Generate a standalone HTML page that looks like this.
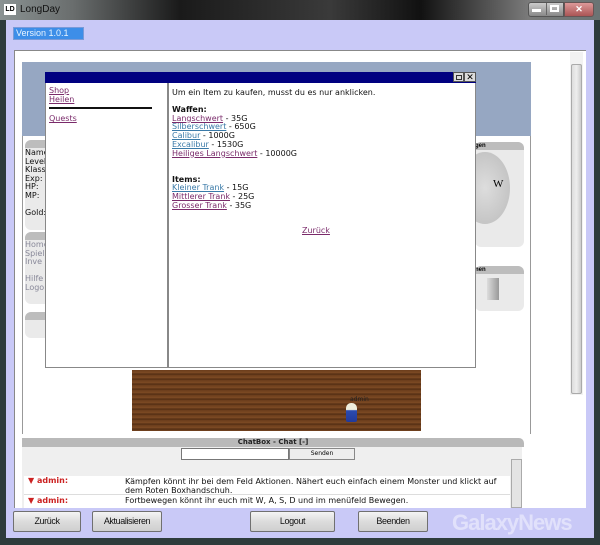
<!DOCTYPE html>
<html><head><meta charset="utf-8"><style>
*{margin:0;padding:0;box-sizing:border-box}
body{width:600px;height:545px;overflow:hidden;position:relative;background:#2e3c3c;font-family:"DejaVu Sans","Liberation Sans",sans-serif}
.a{position:absolute}
.t{font-size:8px;color:#111;line-height:8.7px;white-space:nowrap}
.l1{color:#7a2a6a;text-decoration:underline}
.l2{color:#3a7aa8;text-decoration:underline}
.btn{position:absolute;top:511px;height:21px;background:linear-gradient(#f4f4f4,#dcdcdc 50%,#cfcfcf);border:1px solid #707070;border-radius:2px;font-family:"Liberation Sans",sans-serif;font-size:9px;letter-spacing:-0.4px;text-align:center;line-height:19px;color:#111}
.gb{background:#eaeaea;border-radius:6px}
.gh{background:#bdbdbd;height:8px;border-radius:6px 6px 0 0}
</style></head><body>
<div class="a" style="left:0;top:0;width:600px;height:20px;background:linear-gradient(90deg,#8a9292,#6a6e6e 12%,#1a1a1a 30%,#3a3a3a 55%,#111 70%,#7a7a7a 88%,#6a7474)"></div>
<div class="a" style="left:4px;top:4px;width:12px;height:11px;background:#fff;color:#000;font:bold 7px 'Liberation Sans';line-height:11px;text-align:center">LD</div>
<div class="a" style="left:20px;top:4px;color:#111;font:10px 'Liberation Sans'">LongDay</div>
<div class="a" style="left:528px;top:2px;width:36px;height:15px;border:1px solid #555;border-radius:3px 0 0 3px;background:linear-gradient(#ccc,#888)"></div>
<div class="a" style="left:546px;top:3px;width:1px;height:12px;background:#666"></div>
<div class="a" style="left:532px;top:9px;width:9px;height:3px;background:#fff"></div>
<div class="a" style="left:550px;top:5px;width:9px;height:7px;border:2px solid #fff"></div>
<div class="a" style="left:564px;top:2px;width:30px;height:15px;border:1px solid #655;border-radius:0 3px 3px 0;background:linear-gradient(#d99,#a55);color:#fff;font:bold 9px sans-serif;text-align:center;line-height:13px">✕</div>
<div class="a" style="left:6px;top:20px;width:588px;height:518px;background:#c9c9f7"></div>
<div class="a" style="left:13px;top:27px;width:71px;height:13px;background:#3d8ee8;border:1px solid #7a9ad8;color:#e8f4ff;font:9px 'Liberation Sans';line-height:11px;padding-left:2px">Version 1.0.1</div>
<div class="a" style="left:14px;top:50px;width:572px;height:458px;background:#fff;border-top:1px solid #888;border-left:1px solid #888"></div>
<div class="a" style="left:570px;top:52px;width:13px;height:343px;background:#f2f2f2"></div>
<div class="a" style="left:571px;top:64px;width:11px;height:330px;background:linear-gradient(90deg,#ddd,#eee,#ccc);border:1px solid #aaa;border-radius:2px"></div>
<div class="a" style="left:22px;top:62px;width:509px;height:74px;background:#96a7c2"></div>
<div class="a" style="left:22px;top:136px;width:509px;height:298px;border-left:1px solid #999;border-right:1px solid #999"></div>
<div class="a gb" style="left:25px;top:140px;width:30px;height:90px"><div class="gh"></div></div>
<div class="a t" style="left:25px;top:149px;line-height:8.6px">Name<br>Level<br>Klass<br>Exp:<br>HP:<br>MP:<br><br>Gold:</div>
<div class="a gb" style="left:25px;top:232px;width:30px;height:72px"><div class="gh"></div></div>
<div class="a t" style="left:25px;top:241px;color:#889;line-height:8.6px">Home<br>Spiel<br>Inve<br><br>Hilfe<br>Logo</div>
<div class="a gb" style="left:25px;top:312px;width:30px;height:26px"><div class="gh"></div></div>
<div class="a gb" style="left:475px;top:142px;width:49px;height:105px"><div class="gh" style="font:bold 6px sans-serif;line-height:8px">gen</div></div>
<div class="a" style="left:460px;top:152px;width:50px;height:72px;border-radius:50%;background:radial-gradient(#ddd,#bbb)"></div>
<div class="a" style="left:493px;top:178px;font:11px 'Liberation Serif'">W</div>
<div class="a gb" style="left:475px;top:266px;width:49px;height:45px"><div class="gh" style="font:bold 6px sans-serif;line-height:8px">nen</div></div>
<div class="a" style="left:487px;top:278px;width:12px;height:22px;background:linear-gradient(90deg,#ddd,#999)"></div>
<div class="a" style="left:132px;top:370px;width:289px;height:61px;background:repeating-linear-gradient(#6b3d1c 0,#7d4a24 3px,#4a2810 4px,#6b3d1c 5px);"></div>
<div class="a" style="left:350px;top:396px;font-size:6px;color:#222">admin</div>
<div class="a" style="left:346px;top:403px;width:11px;height:19px;background:linear-gradient(#eed 0,#eed 35%,#2b4bb0 40%,#223a9a);border-radius:5px 5px 2px 2px"></div>
<div class="a" style="left:22px;top:438px;width:502px;height:9px;background:#b9b9b9;border-radius:0 5px 0 0;font:bold 7px 'DejaVu Sans';text-align:center;line-height:9px;color:#222">ChatBox - Chat [-]</div>
<div class="a" style="left:22px;top:447px;width:500px;height:61px;background:#efefef"></div>
<div class="a" style="left:181px;top:448px;width:108px;height:12px;background:#fff;border:1px solid #777"></div>
<div class="a" style="left:289px;top:448px;width:66px;height:12px;background:#eee;border:1px solid #888;font-size:6px;text-align:center;line-height:10px">Senden</div>
<div class="a" style="left:24px;top:476px;width:486px;height:32px;background:#fff"></div>
<div class="a" style="left:24px;top:494px;width:486px;height:1px;background:#ddd"></div>
<div class="a t" style="left:28px;top:477px;color:#c22;font-weight:bold">▼ admin:</div>
<div class="a t" style="left:125px;top:477px;line-height:9px">Kämpfen könnt ihr bei dem Feld Aktionen. Nähert euch einfach einem Monster und klickt auf<br>dem Roten Boxhandschuh.</div>
<div class="a t" style="left:28px;top:497px;color:#c22;font-weight:bold">▼ admin:</div>
<div class="a t" style="left:125px;top:497px">Fortbewegen könnt ihr euch mit W, A, S, D und im menüfeld Bewegen.</div>
<div class="a" style="left:511px;top:459px;width:11px;height:49px;background:#e4e4e4;border:1px solid #aaa"></div>
<div class="a" style="left:45px;top:72px;width:431px;height:296px;background:#fff;border:1px solid #888"></div>
<div class="a" style="left:45px;top:72px;width:431px;height:11px;background:#000080"></div>
<div class="a" style="left:453px;top:72px;width:11px;height:10px;background:#ddd;border:1px solid #555"></div>
<div class="a" style="left:456px;top:75px;width:6px;height:5px;border:1px solid #333"></div>
<div class="a" style="left:464px;top:72px;width:12px;height:10px;background:#ddd;border:1px solid #555;font:9px sans-serif;text-align:center;line-height:8px">✕</div>
<div class="a" style="left:167px;top:83px;width:2px;height:285px;background:#888"></div>
<div class="a t" style="left:49px;top:87px"><span class="l1">Shop</span><br><span class="l1">Heilen</span></div>
<div class="a" style="left:49px;top:107px;width:103px;height:2px;background:#111"></div>
<div class="a t" style="left:49px;top:115px"><span class="l1">Quests</span></div>
<div class="a t" style="left:172px;top:89px">Um ein Item zu kaufen, musst du es nur anklicken.</div>
<div class="a t" style="left:172px;top:106px"><b>Waffen:</b><br><span class="l1">Langschwert</span> - 35G<br><span class="l2">Silberschwert</span> - 650G<br><span class="l2">Calibur</span> - 1000G<br><span class="l2">Excalibur</span> - 1530G<br><span class="l1">Heiliges Langschwert</span> - 10000G<br><br><br><b>Items:</b><br><span class="l2">Kleiner Trank</span> - 15G<br><span class="l1">Mittlerer Trank</span> - 25G<br><span class="l1">Grosser Trank</span> - 35G</div>
<div class="a t" style="left:302px;top:227px"><span class="l1">Zurück</span></div>
<div class="btn" style="left:13px;width:68px">Zurück</div>
<div class="btn" style="left:92px;width:70px">Aktualisieren</div>
<div class="btn" style="left:250px;width:85px">Logout</div>
<div class="btn" style="left:358px;width:70px">Beenden</div>
<div class="a" style="left:452px;top:510px;font:bold 22px 'Liberation Sans';color:rgba(255,255,255,0.45);letter-spacing:-1px">GalaxyNews</div>
</body></html>
